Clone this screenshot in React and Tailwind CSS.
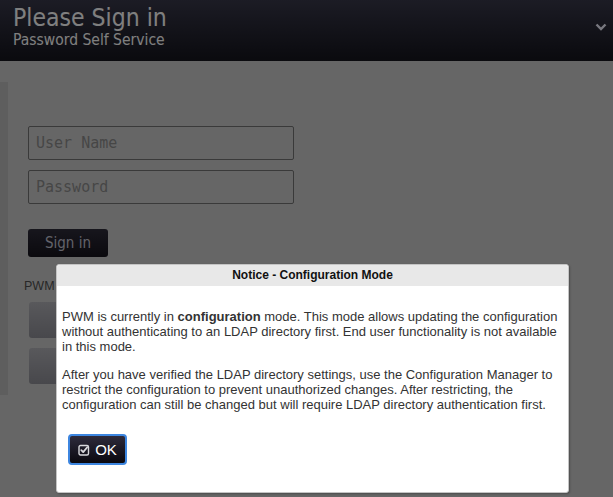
import React from "react";

function CheckSquare() {
  return (
    <svg width="12" height="12" viewBox="0 0 12 12" fill="none">
      <rect x="1" y="1.5" width="9.5" height="9.5" rx="1.5" stroke="#d8d8dc" strokeWidth="1.4" />
      <path d="M3.3 6.2 L5.2 8.1 L9.2 3.2" stroke="#d8d8dc" strokeWidth="1.8" strokeLinecap="round" strokeLinejoin="round" />
    </svg>
  );
}

export default function App() {
  return (
    <div className="relative min-h-screen bg-[#cccccc] font-['DejaVu_Sans_Condensed','DejaVu_Sans',sans-serif]">
      {/* header */}
      <header className="flex h-[61px] items-start justify-between bg-gradient-to-b from-[#38384a] to-[#15151d] pl-[13px] pr-[6px] pt-[4px]">
        <div>
          <h1 className="text-[24.5px] leading-[28px] text-white">Please Sign in</h1>
          <p className="text-[15.5px] leading-[17px] text-white">Password Self Service</p>
        </div>
        <svg className="mt-[19px]" width="12" height="8" viewBox="0 0 12 8" fill="none">
          <path d="M1.5 1.5 L6 6 L10.5 1.5" stroke="#f0f0ff" strokeWidth="2.4" />
        </svg>
      </header>

      {/* login panel */}
      <main className="mt-[21px] h-[313px] border-l-[8px] border-[#bcbcbc] pl-[20px] pt-[44px]">
        <div className="flex flex-col gap-[10px]">
          <input
            className="h-[34px] w-[266px] rounded-[2px] border border-[#747474] bg-transparent px-[7px] font-['DejaVu_Sans_Mono',monospace] text-[15px] placeholder:text-[#8c8c8c]"
            placeholder="User Name"
          />
          <input
            type="password"
            className="h-[34px] w-[266px] rounded-[2px] border border-[#747474] bg-transparent px-[7px] font-['DejaVu_Sans_Mono',monospace] text-[15px] placeholder:text-[#8c8c8c]"
            placeholder="Password"
          />
        </div>
        <button className="mt-[25px] h-[28px] w-[80px] rounded-[3px] bg-gradient-to-b from-[#2e2c3a] to-[#16141c] text-[15px] text-[#c4c4d4]">
          Sign in
        </button>
        <div className="-ml-[4px] mt-[20px] font-['Liberation_Sans',Arial,sans-serif] text-[12.5px] text-[#505050]">PWM</div>
        <div className="mt-[6px] flex flex-col gap-[10px] pl-[1px]">
          <div className="h-[36px] w-[260px] rounded-[3px] bg-gradient-to-b from-[#b2b2b8] to-[#909098]" />
          <div className="h-[36px] w-[260px] rounded-[3px] bg-gradient-to-b from-[#b2b2b8] to-[#909098]" />
        </div>
      </main>

      {/* underlay */}
      <div className="absolute inset-0 bg-black/50" />

      {/* dialog */}
      <div className="absolute left-[56px] top-[264px] flex h-[229px] w-[513px] flex-col rounded-[3px] border border-[#c4c4c4] bg-white font-['Liberation_Sans',Arial,sans-serif] shadow-[1px_1px_2px_rgba(0,0,0,0.25)]">
        <div className="h-[21px] rounded-t-[3px] bg-[#e8e8e8] text-center text-[12px] font-bold leading-[21px] text-[#111]">
          Notice - Configuration Mode
        </div>
        <div className="px-[5px] pt-[10px] text-[13px] leading-[15px] text-[#333]">
          <p className="my-[13px]">
            PWM is currently in <b>configuration</b> mode. This mode allows updating the configuration without
            authenticating to an LDAP directory first. End user functionality is not available in this mode.
          </p>
          <p className="my-[13px]">
            After you have verified the LDAP directory settings, use the Configuration Manager to restrict the
            configuration to prevent unauthorized changes. After restricting, the configuration can still be changed
            but will require LDAP directory authentication first.
          </p>
          <button className="ml-[6px] mt-[22px] flex h-[31px] w-[59px] items-center justify-center gap-[5px] rounded-[4px] border-2 border-[#3d86e0] bg-gradient-to-b from-[#2e2b3c] to-[#0b0910] text-[15px] text-white">
            <CheckSquare />
            OK
          </button>
        </div>
      </div>
    </div>
  );
}
